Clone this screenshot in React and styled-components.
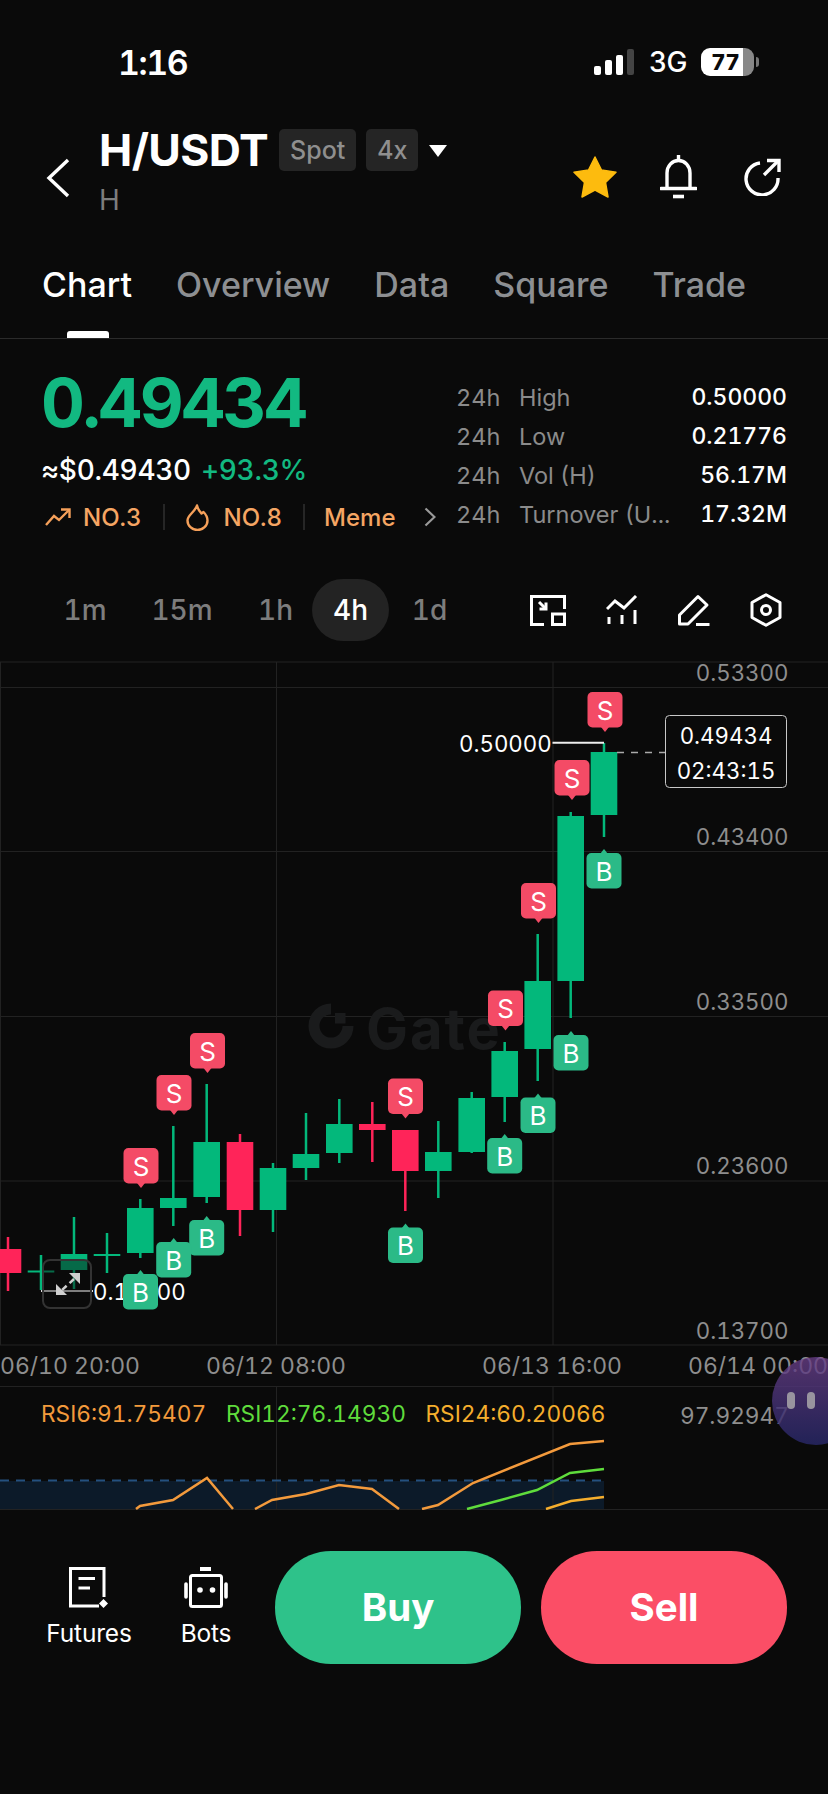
import React from "react";
import styled, { createGlobalStyle } from "styled-components";

const Global = createGlobalStyle`
  html, body { margin: 0; padding: 0; background: #0a0a0a; }
  body {
    font-family: Inter, "Liberation Sans", sans-serif;
    font-variant-numeric: tabular-nums;
    color: #fff;
  }
`;

const Page = styled.div`
  position: relative;
  width: 828px;
  height: 1794px;
  overflow: hidden;
  background: #0a0a0a;
  display: flex;
  flex-direction: column;
`;

/* status bar */
const StatusBar = styled.div`
  height: 124px;
  box-sizing: border-box;
  padding: 0 74px 0 118px;
  display: flex;
  align-items: center;
  justify-content: space-between;
`;
const Time = styled.div`
  font-size: 34px;
  font-weight: 600;
  letter-spacing: -1.5px;
`;
const StatusRight = styled.div`
  display: flex;
  align-items: center;
  gap: 14px;
`;
const NetLabel = styled.span`
  font-size: 28px;
  font-weight: 500;
  letter-spacing: -0.5px;
`;
const Battery = styled.div`
  position: relative;
  width: 53px;
  height: 28px;
  border-radius: 9px;
  background: linear-gradient(90deg, #fff 0 80%, #888 80% 100%);
  color: #0a0a0a;
  font-size: 22px;
  font-weight: 800;
  display: flex;
  align-items: center;
  justify-content: center;
  padding-right: 4px;
  box-sizing: border-box;
  &::after {
    content: "";
    position: absolute;
    right: -5px;
    top: 9px;
    width: 3px;
    height: 10px;
    border-radius: 0 3px 3px 0;
    background: #777;
  }
`;

/* header */
const Header = styled.div`
  height: 116px;
  box-sizing: border-box;
  padding: 0 46px;
  display: flex;
  align-items: flex-start;
`;
const BackSlot = styled.div`
  width: 53px;
  padding-top: 34px;
`;
const TitleBlock = styled.div`
  display: flex;
  flex-direction: column;
  flex: 1;
`;
const TitleRow = styled.div`
  display: flex;
  align-items: center;
  height: 42px;
  margin-top: 5px;
`;
const Title = styled.div`
  font-size: 44.5px;
  font-weight: 700;
  letter-spacing: -0.6px;
  margin-right: 11px;
`;
const Tag = styled.div`
  height: 42px;
  box-sizing: border-box;
  padding: 0 11px;
  margin-right: 10px;
  border-radius: 5px;
  background: #252525;
  color: #8f8f8f;
  font-size: 25px;
  font-weight: 500;
  display: flex;
  align-items: center;
`;
const Caret = styled.div`
  width: 0;
  height: 0;
  margin: 2px 0 0 1px;
  border-left: 9px solid transparent;
  border-right: 9px solid transparent;
  border-top: 12px solid #fff;
`;
const SubTitle = styled.div`
  color: #7d7d7d;
  font-size: 28px;
  margin-top: 12px;
  line-height: 34px;
`;
const HeaderIcons = styled.div`
  display: flex;
  align-items: center;
  gap: 43px;
  padding: 31px 1px 0 0;
  & > svg:last-child {
    margin-left: 3px;
  }
`;

/* tabs */
const Tabs = styled.div`
  height: 99px;
  box-sizing: border-box;
  padding: 0 82px 0 42px;
  border-bottom: 1px solid #2b2b2b;
  display: flex;
  justify-content: space-between;
`;
const Tab = styled.div`
  position: relative;
  padding-top: 24px;
  line-height: 42px;
  font-size: 34px;
  font-weight: 500;
  color: ${(p) => (p.$active ? "#fff" : "#8d8f92")};
  &::after {
    content: "";
    display: ${(p) => (p.$active ? "block" : "none")};
    position: absolute;
    left: 25px;
    bottom: 0;
    width: 42px;
    height: 7px;
    border-radius: 3px 3px 0 0;
    background: #fff;
  }
`;

/* quote */
const Quote = styled.div`
  height: 240px;
  box-sizing: border-box;
  padding: 26px 41px 0 41px;
  display: flex;
  justify-content: space-between;
`;
const QuoteLeft = styled.div`
  width: 400px;
  display: flex;
  flex-direction: column;
`;
const Price = styled.div`
  font-size: 68px;
  font-weight: 700;
  line-height: 74px;
  letter-spacing: -2.5px;
  color: #12b981;
`;
const SubPrice = styled.div`
  display: flex;
  gap: 10px;
  margin-top: 14px;
  line-height: 34px;
  font-size: 28px;
  font-weight: 500;
  letter-spacing: -0.3px;
`;
const Change = styled.span`
  color: #12b981;
`;
const Ranks = styled.div`
  display: flex;
  align-items: center;
  margin-top: 12px;
  padding-left: 4px;
  height: 36px;
  color: #f5a563;
  font-size: 24px;
  font-weight: 500;
`;
const RankDivider = styled.span`
  flex: none;
  width: 2px;
  height: 26px;
  background: #262626;
  margin: ${(p) => p.$m};
`;
const RankIcon = styled.span`
  display: flex;
  margin-right: ${(p) => p.$gap}px;
`;
const Chevron = styled.span`
  display: flex;
  margin-left: 28px;
`;
const Stats = styled.div`
  width: 331px;
  padding-top: 12.5px;
  display: flex;
  flex-direction: column;
`;
const StatRow = styled.div`
  height: 39px;
  display: flex;
  align-items: center;
  font-size: 23.5px;
  color: #8b8b8b;
`;
const StatPeriod = styled.span`
  width: 63px;
`;
const StatValue = styled.span`
  margin-left: auto;
  font-size: 23px;
  color: #fff;
  font-weight: 500;
`;

/* time frames */
const Frames = styled.div`
  height: 62px;
  box-sizing: border-box;
  padding: 0 46px 0 45px;
  display: flex;
  align-items: center;
`;
const Frame = styled.div`
  height: 62px;
  width: ${(p) => p.$w}px;
  border-radius: 31px;
  display: flex;
  align-items: center;
  justify-content: center;
  background: ${(p) => (p.$active ? "#232323" : "transparent")};
  color: ${(p) => (p.$active ? "#fff" : "#7d7d7d")};
  font-size: 28px;
  font-weight: 500;
`;
const Tools = styled.div`
  margin-left: auto;
  display: flex;
  align-items: center;
  gap: 40px;
`;

/* chart */
const ChartWrap = styled.div`
  position: relative;
  margin-top: 20px;
  height: 849px;
`;
const ChartSvg = styled.svg`
  display: block;
  width: 828px;
  height: 849px;
`;
const AxisText = styled.text`
  font-family: Inter, "Liberation Sans", sans-serif;
  font-size: ${(p) => p.$size || 22.3}px;
  fill: #8e8e8e;
  dominant-baseline: central;
`;
const WhiteText = styled(AxisText)`
  fill: #fff;
`;
const RsiText = styled(AxisText)`
  fill: ${(p) => p.$c};
`;
const MarkerText = styled.text`
  font-family: Inter, "Liberation Sans", sans-serif;
  font-size: 26px;
  font-weight: 400;
  fill: #fff;
  text-anchor: middle;
  dominant-baseline: central;
`;
const Watermark = styled.text`
  font-family: Inter, "Liberation Sans", sans-serif;
  font-size: 56px;
  font-weight: 700;
  letter-spacing: 2px;
  fill: #1a1b1c;
  dominant-baseline: central;
`;
const Bubble = styled.div`
  position: absolute;
  left: 772px;
  top: 696px;
  width: 88px;
  height: 88px;
  border-radius: 50%;
  background: linear-gradient(180deg, rgba(105, 62, 135, 0.78), rgba(38, 38, 100, 0.85));
  display: flex;
  gap: 12px;
  padding: 35px 0 0 15px;
  box-sizing: border-box;
  &::before, &::after {
    content: "";
    width: 8px;
    height: 17px;
    border-radius: 4px;
    background: #98949f;
  }
`;
const ExpandButton = styled.div`
  position: absolute;
  left: 42px;
  top: 598px;
  width: 50px;
  height: 50px;
  box-sizing: border-box;
  border: 2px solid #333;
  border-radius: 8px;
  background: rgba(10, 10, 10, 0.45);
`;

/* bottom */
const Bottom = styled.div`
  margin-top: 40px;
  height: 114px;
  box-sizing: border-box;
  padding: 0 41px 0 46px;
  display: flex;
  align-items: center;
`;
const Action = styled.div`
  display: flex;
  flex-direction: column;
  align-items: center;
  width: ${(p) => p.$w}px;
  margin-right: ${(p) => p.$mr}px;
  font-size: 24.5px;
  font-weight: 400;
  letter-spacing: -0.2px;
`;
const ActionLabel = styled.span`
  margin-top: 10px;
  line-height: 30px;
`;
const TradeButton = styled.div`
  width: 246px;
  flex: none;
  height: 113px;
  border-radius: 56px;
  background: ${(p) => p.$bg};
  display: flex;
  align-items: center;
  justify-content: center;
  font-size: 38.5px;
  font-weight: 700;
  margin-right: ${(p) => p.$mr || 0}px;
`;

/* data */
const candles = [
  [8, 1249, 1273, 1237, 1291, "r"], [41, 1270.5, 1272.5, 1255, 1290, "g"], [74, 1254, 1270, 1217, 1289, "g"],
  [107, 1254, 1256, 1233, 1273, "g"], [140.3, 1208, 1253, 1199, 1258, "g"], [173.3, 1198, 1208, 1126, 1226, "g"],
  [206.7, 1142, 1197, 1084, 1203, "g"], [240, 1142, 1210, 1134, 1236, "r"], [273, 1168, 1210, 1163, 1232, "g"],
  [306, 1154, 1168, 1113, 1180, "g"], [339.3, 1124, 1153, 1099, 1163, "g"], [372.3, 1124, 1130, 1102, 1162, "r"],
  [405.3, 1130, 1171, 1130, 1211, "r"], [438.3, 1152, 1171, 1121, 1198, "g"], [471.7, 1098, 1152, 1092, 1153, "g"],
  [504.7, 1051, 1097, 1042, 1122, "g"], [537.7, 981, 1049, 934, 1081, "g"], [570.7, 816, 981, 812, 1018, "g"],
  [604, 752, 815, 743, 837, "g"],
];
const sells = [[605, 692], [572, 760], [538.5, 883], [505.5, 990.5], [405.5, 1078.5], [207.5, 1033], [174, 1075], [141, 1148]];
const buys = [[604, 853], [571, 1035], [538, 1097.5], [504.7, 1138], [405.5, 1227.5], [206.7, 1220], [173.7, 1242], [140.5, 1274]];
const axis = [["0.53300", 672.7], ["0.43400", 836.7], ["0.33500", 1001.7], ["0.23600", 1165.7], ["0.13700", 1330]];
const gridY = [662, 687.5, 851.5, 1016.5, 1181, 1345, 1386.5, 1509.5];
const rsiOrange = [
  "136,1509 140,1506 173,1500 207,1478 233,1509",
  "255,1509 272,1500 306,1494 339,1485 372,1489 399,1509",
  "422,1509 438,1505 473,1483 570,1444 604,1441",
];
const dates = [["06/10 20:00", 0], ["06/12 08:00", 206], ["06/13 16:00", 482], ["06/14 00:00", 688]];
const frames = [["1m", 80], ["15m", 114], ["1h", 73], ["4h", 77, true], ["1d", 81]];
const stats = [["High", "0.50000"], ["Low", "0.21776"], ["Vol (H)", "56.17M"], ["Turnover (U...", "17.32M"]];
const tabs = ["Chart", "Overview", "Data", "Square", "Trade"];

const Marker = ({ x, y, kind }) => {
  const sell = kind === "S";
  const fill = sell ? "#f44b66" : "#2bba87";
  const left = x - 17.5;
  return (
    <g>
      <rect x={left} y={y} width="35" height="35.5" rx="5" fill={fill} />
      {sell ? (
        <path d={`M${x - 4} ${y + 35} L${x} ${y + 40} L${x + 4} ${y + 35}Z`} fill={fill} />
      ) : (
        <path d={`M${x - 4} ${y + 1} L${x} ${y - 4} L${x + 4} ${y + 1}Z`} fill={fill} />
      )}
      <MarkerText x={x} y={y + 18}>{kind}</MarkerText>
    </g>
  );
};

const Candle = ({ c: [x, top, bottom, hi, lo, color] }) => {
  const fill = color === "g" ? "#03b87b" : "#ff2459";
  return (
    <g fill={fill}>
      <rect x={x - 1.25} y={hi} width="2.5" height={lo - hi} />
      <rect x={x - 13.3} y={top} width="26.6" height={bottom - top} />
    </g>
  );
};

const GateMark = () => (
  <g fill="none" stroke="#1a1b1c">
    <path d="M331 1009 A 17 17 0 1 0 348 1026" strokeWidth="11" />
    <rect x="335" y="1013" width="10.5" height="10.5" fill="#1a1b1c" stroke="none" />
  </g>
);

const Chart = () => (
  <ChartSvg viewBox="0 661 828 849" aria-label="H/USDT candlestick chart">
    <rect x="0" y="1481" width="604" height="28" fill="#0c1a29" />
    {gridY.map((y) => (
      <rect key={y} x="0" y={y - 0.5} width="828" height="1" fill="#222" />
    ))}
    {[276, 552.5].map((x) => (
      <g key={x} fill="#222">
        <rect x={x} y="662" width="1" height="683" />
        <rect x={x} y="1386" width="1" height="123" />
      </g>
    ))}
    <rect x="0" y="662" width="1" height="683" fill="#222" />

    <GateMark />
    <Watermark x="366" y="1029">Gate</Watermark>

    {candles.map((c) => <Candle key={c[0]} c={c} />)}

    <line x1="552.5" y1="742.7" x2="604" y2="742.7" stroke="#eee" strokeWidth="2" />
    <WhiteText x="459" y="743.5">0.50000</WhiteText>
    <line x1="617" y1="752.5" x2="665" y2="752.5" stroke="#aaa" strokeWidth="1.5" strokeDasharray="7 7" />
    <rect x="665.5" y="715.5" width="121" height="72" rx="4" fill="#0a0a0a" stroke="#c8c8c8" strokeWidth="1" />
    <WhiteText x="726" y="735" textAnchor="middle">0.49434</WhiteText>
    <WhiteText x="726" y="770" textAnchor="middle">02:43:15</WhiteText>

    <line x1="41" y1="1291" x2="93" y2="1291" stroke="#ddd" strokeWidth="2" />
    <WhiteText x="93" y="1291">0.18000</WhiteText>

    {sells.map(([x, y]) => <Marker key={x} x={x} y={y} kind="S" />)}
    {buys.map(([x, y]) => <Marker key={x} x={x} y={y} kind="B" />)}

    {axis.map(([t, y]) => (
      <AxisText key={t} x="788.5" y={y} textAnchor="end">{t}</AxisText>
    ))}
    {dates.map(([t, x]) => (
      <AxisText key={t} $size={23} x={x} y="1366">{t}</AxisText>
    ))}

    <RsiText $size={22.7} $c="#f39a3c" x="41" y="1413">RSI6:91.75407</RsiText>
    <RsiText $size={22.7} $c="#5fdc3c" x="226" y="1413">RSI12:76.14930</RsiText>
    <RsiText $size={22.7} $c="#f5ae2d" x="425.5" y="1413">RSI24:60.20066</RsiText>
    <AxisText $size={22.7} x="789" y="1415" textAnchor="end">97.92947</AxisText>

    <line x1="0" y1="1480.5" x2="604" y2="1480.5" stroke="#24507f" strokeWidth="2" strokeDasharray="9 7" />
    {rsiOrange.map((p) => (
      <polyline key={p} points={p} fill="none" stroke="#f39a3c" strokeWidth="2.5" />
    ))}
    <polyline points="467,1509 501,1500 537,1490 570,1473 604,1469" fill="none" stroke="#5fdc3c" strokeWidth="2.5" />
    <polyline points="546,1509 571,1501 604,1497" fill="none" stroke="#f5ae2d" strokeWidth="2.5" />
  </ChartSvg>
);

const Signal = () => (
  <svg width="41" height="26" viewBox="0 0 41 26">
    <rect x="0" y="17" width="7" height="9" rx="2" fill="#fff" />
    <rect x="11" y="11" width="7" height="15" rx="2" fill="#fff" />
    <rect x="22" y="6" width="7" height="20" rx="2" fill="#fff" />
    <rect x="33" y="0" width="7" height="26" rx="2" fill="#444" />
  </svg>
);
const BackIcon = () => (
  <svg width="24" height="40" viewBox="0 0 24 40" fill="none" stroke="#fff" strokeWidth="3.4">
    <path d="M22 2 L3 20 L22 38" />
  </svg>
);
const StarIcon = () => (
  <svg width="44" height="42" viewBox="0 0 44 42">
    <path d="M22 1 L28.5 14 L43 16.2 L32.5 26.4 L35 41 L22 34 L9 41 L11.5 26.4 L1 16.2 L15.5 14 Z" fill="#fdbb0e" stroke="#fdbb0e" strokeWidth="1.5" strokeLinejoin="round" />
  </svg>
);
const BellIcon = () => (
  <svg width="37" height="44" viewBox="0 0 37 44" fill="none" stroke="#fff" strokeWidth="3.4">
    <path d="M18.5 0 V5" />
    <path d="M7 33 V18 A11.5 12.5 0 0 1 30 18 V33" />
    <path d="M1 33.5 H36" strokeLinecap="round" />
    <path d="M13 41.5 H24" strokeWidth="3.6" />
  </svg>
);
const ShareIcon = () => (
  <svg width="38" height="38" viewBox="0 0 38 38" fill="none" stroke="#fff" strokeWidth="3.4">
    <path d="M17 5 A16 16 0 1 0 35 20" />
    <path d="M21 17 L35 3" />
    <path d="M24 2.5 H36 V14" />
  </svg>
);
const TrendIcon = () => (
  <svg width="26" height="18" viewBox="0 0 26 18" fill="none" stroke="#f5a05a" strokeWidth="2.4">
    <path d="M1 17 L9 8 L14 12 L24 2" />
    <path d="M16 1.5 H24.5 V10" />
  </svg>
);
const FlameIcon = () => (
  <svg width="23" height="27" viewBox="0 0 23 27" fill="none" stroke="#f5a05a" strokeWidth="2.4">
    <path d="M11 1.5 C12 6 14 7.5 15.5 9.5 L17.5 8 C20 10.5 21.5 13.5 21.5 16.5 A10 9.5 0 0 1 1.5 16.5 C1.5 11 9 8 11 1.5 Z" strokeLinejoin="round" />
  </svg>
);
const ChevronIcon = () => (
  <svg width="12" height="20" viewBox="0 0 12 20" fill="none" stroke="#9a9a9a" strokeWidth="2.2">
    <path d="M1.5 1.5 L10.5 10 L1.5 18.5" />
  </svg>
);
const LayoutIcon = () => (
  <svg width="36" height="31" viewBox="0 0 36 31" fill="none" stroke="#fff" strokeWidth="3">
    <path d="M14 29.5 H1.5 V1.5 H34.5 V14" />
    <rect x="22.5" y="19" width="12" height="10.5" />
    <path d="M9 7 L15.5 13.5" />
    <path d="M16 7.5 V14 H9.5" />
  </svg>
);
const IndicatorIcon = () => (
  <svg width="32" height="30" viewBox="0 0 32 30" fill="none" stroke="#fff" strokeWidth="3">
    <path d="M1 14 L9 6 L18 13 L30 1" />
    <path d="M3 22 V29 M16 20 V29 M29 15 V29" />
  </svg>
);
const PenIcon = () => (
  <svg width="32" height="32" viewBox="0 0 32 32" fill="none" stroke="#fff" strokeWidth="3">
    <path d="M1.5 30 V21 L20 2.5 L29 11 L10 30 Z" strokeLinejoin="round" />
    <path d="M18 30.5 H31.5" />
  </svg>
);
const GearIcon = () => (
  <svg width="32" height="34" viewBox="0 0 32 34" fill="none" stroke="#fff" strokeWidth="3">
    <path d="M16 1.7 L30 9.5 V24.5 L16 32.3 L2 24.5 V9.5 Z" strokeLinejoin="round" />
    <circle cx="16" cy="17" r="4.5" />
  </svg>
);
const ExpandIcon = () => (
  <svg width="46" height="46" viewBox="0 0 46 46" fill="#cfcfcf" stroke="none">
    <path d="M36 12 V23 L25 12 Z" />
    <path d="M12 34 V23 L23 34 Z" />
    <path d="M30 18 L18 29" stroke="#cfcfcf" strokeWidth="2.5" strokeDasharray="6 4" />
  </svg>
);
const FuturesIcon = () => (
  <svg width="40" height="41" viewBox="0 0 40 41" fill="none" stroke="#fff" strokeWidth="3">
    <path d="M35 30 V1.5 H1.5 V39 H30" />
    <path d="M9.5 11.5 H26 M9.5 21 H21" />
    <path d="M34.5 32 L39 36.5 L34.5 41 L30 36.5 Z" fill="#fff" stroke="none" />
  </svg>
);
const BotsIcon = () => (
  <svg width="44" height="41" viewBox="0 0 44 41" fill="none" stroke="#fff" strokeWidth="3">
    <path d="M16 2 H27" strokeWidth="4" />
    <rect x="6.5" y="8.5" width="31" height="31" rx="2" />
    <path d="M2 17 V30 M42 17 V30" strokeWidth="3.6" strokeLinecap="round" />
    <circle cx="16" cy="23" r="2.8" fill="#fff" stroke="none" />
    <circle cx="28.5" cy="23" r="2.8" fill="#fff" stroke="none" />
  </svg>
);

export default function App() {
  return (
    <Page>
      <Global />
      <StatusBar>
        <Time>1:16</Time>
        <StatusRight>
          <Signal />
          <NetLabel>3G</NetLabel>
          <Battery>77</Battery>
        </StatusRight>
      </StatusBar>

      <Header>
        <BackSlot><BackIcon /></BackSlot>
        <TitleBlock>
          <TitleRow>
            <Title>H/USDT</Title>
            <Tag>Spot</Tag>
            <Tag>4x</Tag>
            <Caret />
          </TitleRow>
          <SubTitle>H</SubTitle>
        </TitleBlock>
        <HeaderIcons>
          <StarIcon />
          <BellIcon />
          <ShareIcon />
        </HeaderIcons>
      </Header>

      <Tabs>
        {tabs.map((t, i) => <Tab key={t} $active={i === 0}>{t}</Tab>)}
      </Tabs>

      <Quote>
        <QuoteLeft>
          <Price>0.49434</Price>
          <SubPrice>
            <span>≈$0.49430</span>
            <Change>+93.3%</Change>
          </SubPrice>
          <Ranks>
            <RankIcon $gap={12}><TrendIcon /></RankIcon>
            <span>NO.3</span>
            <RankDivider $m="0 21px 0 21px" />
            <RankIcon $gap={15}><FlameIcon /></RankIcon>
            <span>NO.8</span>
            <RankDivider $m="0 19px 0 21px" />
            <span>Meme</span>
            <Chevron><ChevronIcon /></Chevron>
          </Ranks>
        </QuoteLeft>
        <Stats>
          {stats.map(([label, value]) => (
            <StatRow key={label}>
              <StatPeriod>24h</StatPeriod>
              <span>{label}</span>
              <StatValue>{value}</StatValue>
            </StatRow>
          ))}
        </Stats>
      </Quote>

      <Frames>
        {frames.map(([t, w, a]) => <Frame key={t} $w={w} $active={a}>{t}</Frame>)}
        <Tools>
          <LayoutIcon />
          <IndicatorIcon />
          <PenIcon />
          <GearIcon />
        </Tools>
      </Frames>

      <ChartWrap>
        <Chart />
        <ExpandButton><ExpandIcon /></ExpandButton>
        <Bubble />
      </ChartWrap>

      <Bottom>
        <Action $w={86} $mr={48}>
          <FuturesIcon />
          <ActionLabel>Futures</ActionLabel>
        </Action>
        <Action $w={52} $mr={43}>
          <BotsIcon />
          <ActionLabel>Bots</ActionLabel>
        </Action>
        <TradeButton $bg="#2ec28a" $mr={20}>Buy</TradeButton>
        <TradeButton $bg="#fb4e66">Sell</TradeButton>
      </Bottom>
    </Page>
  );
}
